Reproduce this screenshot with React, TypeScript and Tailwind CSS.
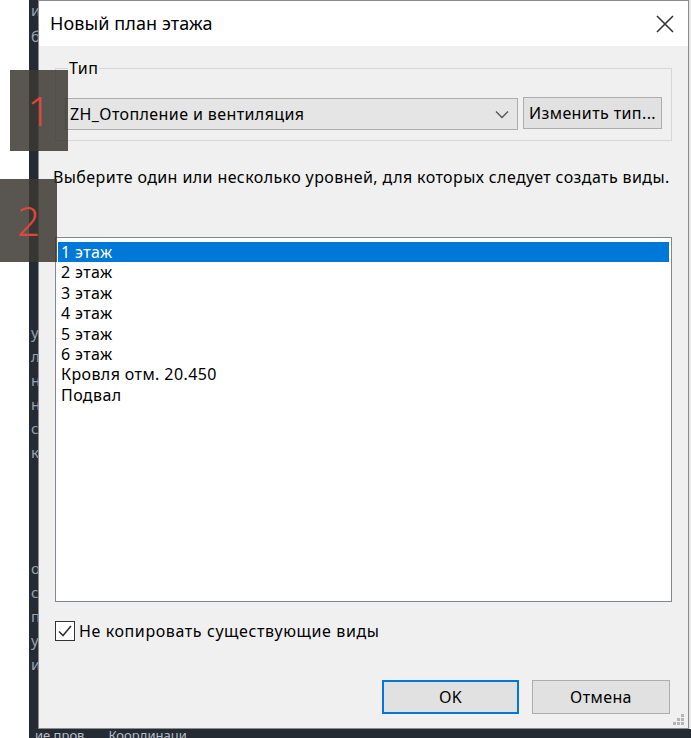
import React from "react";

const levels = [
  "1 этаж",
  "2 этаж",
  "3 этаж",
  "4 этаж",
  "5 этаж",
  "6 этаж",
  "Кровля отм. 20.450",
  "Подвал",
];

// clipped letters of the app window lying behind the dialog
const sideText = [
  { y: "mt-[2px]", t: "и" },
  { y: "mt-[10px]", t: "б" },
  { y: "mt-[280px]", t: "у" },
  { y: "mt-[8px]", t: "л" },
  { y: "mt-[8px]", t: "н" },
  { y: "mt-[8px]", t: "н" },
  { y: "mt-[8px]", t: "с" },
  { y: "mt-[8px]", t: "к" },
  { y: "mt-[100px]", t: "о" },
  { y: "mt-[8px]", t: "с" },
  { y: "mt-[8px]", t: "п" },
  { y: "mt-[8px]", t: "у" },
  { y: "mt-[8px]", t: "и" },
];

const Badge = ({ n, cls }: { n: string; cls: string }) => (
  <div
    className={`absolute flex items-center justify-center bg-[#3c3834]/85 text-[#e0473a] text-[40px] font-light leading-none ${cls}`}
  >
    {n}
  </div>
);

const App = () => {
  return (
    <div
      className="relative w-[691px] h-[738px] overflow-hidden bg-white flex text-black"
      style={{ fontFamily: '"Noto Sans", "Open Sans", sans-serif' }}
    >
      <div className="w-[29px] shrink-0 bg-white" />
      <div className="w-[662px] shrink-0 bg-[#252b33] flex flex-col">
        <div className="flex h-[729px]">
          {/* strip of the window behind */}
          <div className="w-[9px] shrink-0 overflow-hidden flex flex-col text-[15px] leading-[16px] text-[#9aa3b0] pl-[2px]">
            {sideText.map((s, i) => (
              <span key={i} className={s.y}>
                {s.t}
              </span>
            ))}
          </div>

          {/* dialog */}
          <div className="w-[651px] shrink-0 flex flex-col border border-[#8c8c8c] bg-[#f0f0f0]">
            <div className="h-[47px] bg-white flex items-center justify-between pl-[11px] pr-[14px]">
              <span className="text-[18px] tracking-[0.1px]">Новый план этажа</span>
              <svg width="18" height="18" viewBox="0 0 18 18" className="text-[#333]">
                <path d="M1 1L17 17M17 1L1 17" stroke="currentColor" strokeWidth="1.6" />
              </svg>
            </div>

            <div className="flex-1 flex flex-col px-[16px] text-[16px] tracking-[0.4px]">
              <fieldset className="mt-[14px] border border-[#d7d7d7] px-[9px] pb-[10px] pt-[22px]">
                <legend className="ml-[3px] px-[1px] leading-[16px]">Тип</legend>
                <div className="flex gap-[5px] h-[32px]">
                  <div className="flex-1 flex items-center justify-between bg-[#e5e5e5] border border-[#adadad] pl-[4px] pr-[8px]">
                    <span>ZH_Отопление и вентиляция</span>
                    <svg width="14" height="9" viewBox="0 0 14 9">
                      <path d="M1 1.5L7 7.5L13 1.5" fill="none" stroke="#555" strokeWidth="1.3" />
                    </svg>
                  </div>
                  <div className="w-[139px] flex items-center justify-center bg-[#e1e1e1] border border-[#adadad] -mt-[1px] h-[32px]">
                    Изменить тип...
                  </div>
                </div>
              </fieldset>

              <p className="mt-[26px] -ml-[2px] leading-[20px] whitespace-nowrap">
                Выберите один или несколько уровней, для которых следует создать виды.
              </p>

              <div className="mt-[50px] h-[365px] bg-white border border-[#828790] px-[2px] pt-[4px]">
                {levels.map((l, i) => (
                  <div
                    key={l}
                    className={`h-[20.4px] leading-[20px] pl-[3px] ${
                      i === 0 ? "bg-[#0078d7] text-white" : ""
                    }`}
                  >
                    {l}
                  </div>
                ))}
              </div>

              <label className="mt-[19px] flex items-center gap-[4px] h-[20px]">
                <span className="w-[20px] h-[20px] border border-[#333] bg-white flex items-center justify-center">
                  <svg width="16" height="14" viewBox="0 0 16 14">
                    <path d="M2 7.5L6 11.5L14 2" fill="none" stroke="#333" strokeWidth="1.6" />
                  </svg>
                </span>
                <span className="tracking-[0.6px]">Не копировать существующие виды</span>
              </label>

              <div className="flex-1 flex justify-end items-start pt-[39px] gap-[13px] pr-[2px]">
                <div className="w-[137px] h-[34px] flex items-center justify-center bg-[#e1e1e1] border-2 border-[#0078d7]">
                  OK
                </div>
                <div className="w-[138px] h-[34px] flex items-center justify-center bg-[#e1e1e1] border border-[#adadad]">
                  Отмена
                </div>
              </div>

              {/* resize grip */}
              <div className="flex justify-end -mr-[13px] mb-[2px]">
                <svg width="12" height="12" viewBox="0 0 12 12" fill="#b5b5b5">
                  <rect x="8" y="0" width="3" height="3" />
                  <rect x="4" y="4" width="3" height="3" />
                  <rect x="8" y="4" width="3" height="3" />
                  <rect x="0" y="8" width="3" height="3" />
                  <rect x="4" y="8" width="3" height="3" />
                  <rect x="8" y="8" width="3" height="3" />
                </svg>
              </div>
            </div>
          </div>
          <div className="flex-1 bg-[#e8e8e8]" />
        </div>

        {/* status strip under the dialog */}
        <div className="h-[9px] overflow-hidden flex gap-[24px] pl-[6px] text-[13px] leading-[12px] text-[#b8bec6]">
          <span>ие пров</span>
          <span>Координаци</span>
        </div>
      </div>

      <Badge n="1" cls="left-[10px] top-[70px] w-[58px] h-[81px]" />
      <Badge n="2" cls="left-0 top-[179px] w-[57px] h-[83px]" />
    </div>
  );
};

export default App;
